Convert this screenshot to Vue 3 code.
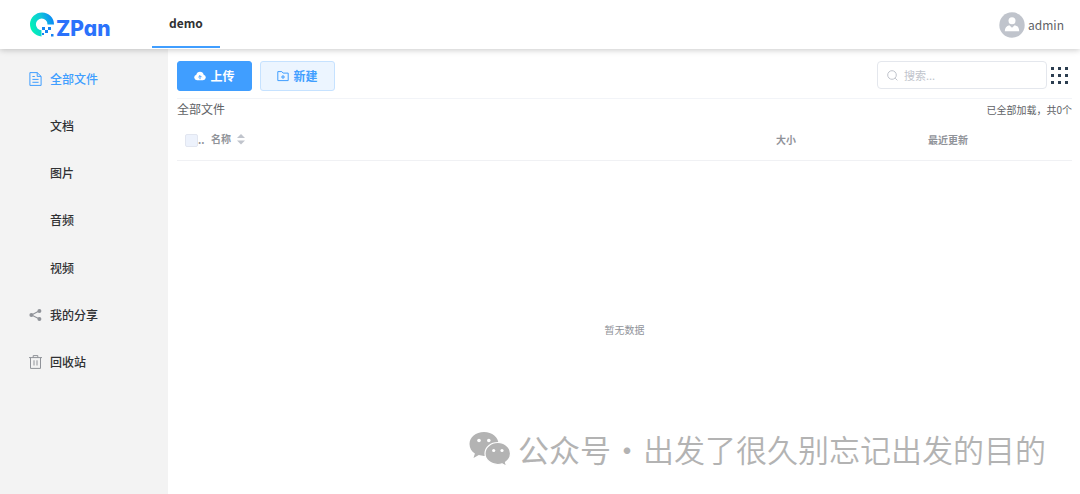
<script setup>
import { ref } from 'vue'

const keyword = ref('')
const active = ref('全部文件')
const menu = [
  { label: '全部文件', icon: 'doc' },
  { label: '文档' },
  { label: '图片' },
  { label: '音频' },
  { label: '视频' },
  { label: '我的分享', icon: 'share' },
  { label: '回收站', icon: 'trash' }
]
const dots = [0, 1, 2, 3, 4, 5, 6, 7, 8]
</script>

<template>
  <div class="page">
    <header class="topbar">
      <a class="logo" href="#" aria-label="ZPan">
        <svg width="26" height="26" viewBox="0 0 26 26" aria-hidden="true">
          <defs>
            <linearGradient id="ring" x1="0" y1="0.6" x2="1" y2="0.3">
              <stop offset="0" stop-color="#00f5b4" />
              <stop offset="0.5" stop-color="#10c8d8" />
              <stop offset="1" stop-color="#0a86f8" />
            </linearGradient>
          </defs>
          <path d="M12.500 24.400A12 12 0 1 1 25 12.400H18.500A5.800 5.800 0 1 0 12.500 18.200Z" fill="url(#ring)" />
          <g fill="#1684f2">
            <rect x="13" y="15" width="3" height="3" />
            <rect x="19" y="15" width="3" height="3" />
            <rect x="16" y="18" width="3" height="3" />
            <rect x="13" y="21" width="2" height="2" />
            <rect x="22" y="22" width="2.500" height="2.500" />
          </g>
        </svg>
        <span class="brand">ZPan</span>
      </a>
      <nav class="tabs"><a class="tab" href="#">demo</a></nav>
      <button class="user" type="button">
        <svg width="26" height="26" viewBox="0 0 26 26" aria-hidden="true">
          <circle cx="13" cy="13" r="12.7" fill="#c0c4cc" />
          <circle cx="13" cy="8.8" r="3.5" fill="#fff" />
          <path d="M5.8 19.3c0-3.6 1.7-5.6 4.5-6.1L13 15.8l2.7-2.6c2.8.5 4.5 2.5 4.5 6.1Z" fill="#fff" />
        </svg>
        <span>admin</span>
      </button>
    </header>

    <div class="body">
      <aside class="sidebar">
        <nav class="menu">
          <a
            v-for="item in menu"
            :key="item.label"
            href="#"
            class="menu-item"
            :class="{ active: active === item.label }"
            @click.prevent="active = item.label"
          >
            <span class="menu-icon">
              <svg v-if="item.icon === 'doc'" width="13" height="14" viewBox="0 0 13 14" fill="none" stroke="currentColor">
                <path d="M.9.6h7.3l3.9 3.8v9H.9ZM8.2.6v3.8h3.9M3.4 4.5h2.4M3.4 7.4h6.2M3.4 10.3h6.2" />
              </svg>
              <svg v-else-if="item.icon === 'share'" width="13" height="14" viewBox="0 0 13 14">
                <path d="M10.5 2.8 2.5 7l8 4" fill="none" stroke="currentColor" stroke-width="1.1" />
                <g fill="currentColor">
                  <circle cx="10.4" cy="3" r="2" />
                  <circle cx="2.4" cy="7" r="2" />
                  <circle cx="10.4" cy="11" r="2" />
                </g>
              </svg>
              <svg v-else-if="item.icon === 'trash'" width="13" height="14" viewBox="0 0 13 14" fill="none" stroke="currentColor">
                <path d="M0 2.6h13M4.2 2.6V.6h4.6v2M1.5 2.6v10.8h10V2.6M5 5.3v5.2M8 5.3v5.2" />
              </svg>
            </span>
            <span>{{ item.label }}</span>
          </a>
        </nav>
      </aside>

      <main class="content">
        <div class="toolbar">
          <button class="btn primary" type="button">
            <svg width="12" height="12" viewBox="0 0 12 12" aria-hidden="true">
              <path d="M3 10.3A2.8 2.8 0 0 1 2.3 4.8 3.8 3.8 0 0 1 9.7 4.8 2.8 2.8 0 0 1 9 10.3Z" fill="#fff" />
              <path d="M6 9.2V5.8M4.4 7.2 6 5.6l1.6 1.6" fill="none" stroke="#409eff" />
            </svg>
            <span>上传</span>
          </button>
          <button class="btn plain" type="button">
            <svg width="12" height="12" viewBox="0 0 12 12" fill="none" stroke="currentColor" aria-hidden="true">
              <path d="M.8 1.6h4l1.3 1.5h5.1v7.5H.8ZM6 5v4M4 7h4" />
            </svg>
            <span>新建</span>
          </button>
          <label class="search">
            <svg width="11" height="11" viewBox="0 0 11 11" fill="none" stroke="#c0c4cc" aria-hidden="true">
              <circle cx="5" cy="5" r="4.3" />
              <path d="m8.2 8.2 2.2 2.2" />
            </svg>
            <input v-model="keyword" type="text" placeholder="搜索..." aria-label="搜索" />
          </label>
          <button class="grid-btn" type="button" aria-label="网格视图">
            <i v-for="d in dots" :key="d"></i>
          </button>
        </div>

        <div class="crumbs">
          <span class="path">全部文件</span>
          <span class="count">已全部加载，共0个</span>
        </div>

        <table class="files">
          <thead>
            <tr>
              <th class="check">
                <div class="check-cell"><input type="checkbox" aria-label="全选" disabled /><span>..</span></div>
              </th>
              <th class="name">
                <button class="sort" type="button">
                  名称
                  <svg width="8" height="12" viewBox="0 0 8 12" fill="#c0c4cc" aria-hidden="true">
                    <path d="M0 5 4 1l4 4ZM0 7.500h8l-4 4Z" />
                  </svg>
                </button>
              </th>
              <th class="size">大小</th>
              <th class="time">最近更新</th>
            </tr>
          </thead>
          <tbody>
            <tr><td class="empty" colspan="4">暂无数据</td></tr>
          </tbody>
        </table>
      </main>
    </div>

    <div class="watermark">
      <svg width="42" height="36" viewBox="0 0 42 36" aria-hidden="true">
        <path d="M15 1C6.800 1 .5 6.300.5 13c0 4 2 7.300 5.400 9.500L4.500 27l5.300-2.900c1.700.5 3.400.8 5.200.8 8.200 0 14.500-5.300 14.500-11.900S23.200 1 15 1Z" fill="#b3b3b3" />
        <path d="M28.800 11.500c-7 0-12.800 4.800-12.800 11s5.700 11 12.800 11c1.600 0 3-.2 4.400-.7l4.300 2.400-1-4c3.100-2 5-5 5-8.700 0-6.200-5.700-11-12.700-11Z" fill="#b3b3b3" stroke="#fff" stroke-width="1.200" />
        <g fill="#fff">
          <circle cx="10" cy="9.500" r="1.800" />
          <circle cx="19.800" cy="9.500" r="1.800" />
          <circle cx="24.700" cy="19.500" r="1.600" />
          <circle cx="33" cy="19.500" r="1.600" />
        </g>
      </svg>
      <span class="account">公众号</span>
      <span class="separator">·</span>
      <span>出发了很久别忘记出发的目的</span>
    </div>
  </div>
</template>

<style>
body {
  margin: 0;
  background: #fff;
}
</style>

<style scoped>
.page {
  position: relative;
  display: flex;
  flex-direction: column;
  min-height: 100vh;
  font: 12px/18px "Noto Sans CJK SC", sans-serif;
  color: #303133;
}
a {
  color: inherit;
  text-decoration: none;
}
button {
  margin: 0;
  padding: 0;
  border: 0;
  background: none;
  font: inherit;
  color: inherit;
  cursor: pointer;
}
svg {
  flex: none;
  display: block;
}
.topbar {
  position: relative;
  z-index: 1;
  display: flex;
  height: 49px;
  background: #fff;
  box-shadow: 0 1px 6px rgba(0, 0, 0, 0.22);
}
.logo {
  display: flex;
  align-items: flex-start;
  gap: 1px;
  width: 123px;
  padding: 12px 0 0 29px;
}
.brand {
  padding-top: 5px;
  font: 800 21px/24px Inter, sans-serif;
  font-feature-settings: "cv11";
  color: #2b72fb;
}
.tab {
  display: block;
  height: 46px;
  padding: 0 17px;
  border-bottom: 2px solid #409eff;
  line-height: 46px;
  font-weight: 700;
}
.user {
  display: flex;
  align-items: center;
  gap: 3px;
  margin-left: auto;
  padding-right: 16px;
  color: #606266;
}
.body {
  flex: 1;
  display: flex;
}
.sidebar {
  width: 168px;
  flex: none;
  padding-top: 6px;
  background: #f3f3f3;
}
.menu {
  display: flex;
  flex-direction: column;
  height: 331px;
}
.menu-item {
  flex: 1;
  display: flex;
  align-items: center;
  gap: 8px;
  padding-left: 29px;
  font-weight: 500;
}
.menu-icon {
  width: 13px;
  color: #909399;
}
.active,
.active .menu-icon {
  color: #409eff;
}
.content {
  flex: 1;
  min-width: 0;
  padding: 0 8px 0 9px;
}
.toolbar {
  display: flex;
  align-items: flex-start;
  padding: 12px 0 7px;
  border-bottom: 1px solid #f2f4f8;
}
.btn {
  display: flex;
  align-items: center;
  justify-content: center;
  gap: 4px;
  box-sizing: border-box;
  width: 75px;
  height: 30px;
  margin-right: 8px;
  border: 1px solid #409eff;
  border-radius: 3px;
  font-weight: 700;
}
.primary {
  background: #409eff;
  color: #fff;
}
.plain {
  border-color: #c6e2ff;
  background: #ecf5ff;
  color: #409eff;
}
.search {
  display: flex;
  align-items: center;
  gap: 6px;
  box-sizing: border-box;
  width: 170px;
  height: 28px;
  margin-left: auto;
  padding: 0 9px;
  border: 1px solid #e4e7ed;
  border-radius: 4px;
}
.search input {
  flex: 1;
  min-width: 0;
  padding: 0;
  border: 0;
  outline: 0;
  background: none;
  font: inherit;
  font-size: 11px;
}
.search input::placeholder {
  color: #c0c4cc;
}
.grid-btn {
  display: grid;
  grid-template-columns: repeat(3, 3px);
  align-content: center;
  gap: 4px;
  height: 28px;
  margin: 0 4px;
}
.grid-btn i {
  height: 3px;
  background: #2c3e50;
}
.crumbs {
  display: flex;
  justify-content: space-between;
  align-items: baseline;
  height: 22px;
  padding-top: 1px;
  color: #606266;
}
.count {
  font-size: 10px;
}
.files {
  width: 100%;
  border-collapse: collapse;
  table-layout: fixed;
  font-size: 10px;
  color: #909399;
}
.files th {
  height: 36px;
  padding: 0 0 2px;
  border-bottom: 1px solid #f0f1f4;
  text-align: left;
  font-weight: 700;
}
.check {
  width: 34px;
}
.size {
  width: 152px;
}
.time {
  width: 144px;
}
.check-cell {
  display: flex;
  align-items: center;
  padding-left: 8px;
}
.check-cell input {
  appearance: none;
  flex: none;
  width: 13px;
  height: 13px;
  margin: 0;
  border: 1px solid #e2e6f0;
  border-radius: 2px;
  background: #edf2fc;
}
.sort {
  display: flex;
  align-items: center;
  gap: 6px;
  padding-bottom: 2px;
}
.empty {
  height: 338px;
  padding: 0;
  text-align: center;
}
.watermark {
  position: absolute;
  right: 34px;
  bottom: 28px;
  display: flex;
  align-items: center;
  font-size: 31px;
  line-height: 44px;
  font-weight: 350;
  white-space: nowrap;
  color: #b3b3b3;
}
.account {
  margin-left: 7px;
  font-weight: 400;
}
.separator {
  width: 32px;
  text-align: center;
  font-weight: 400;
}
</style>
